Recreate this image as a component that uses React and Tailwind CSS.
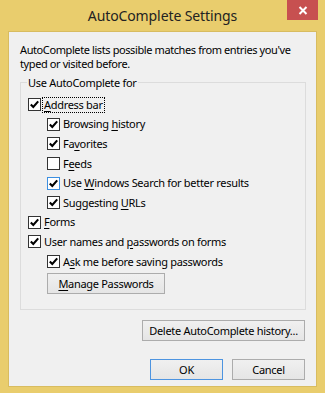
import React from 'react';

const font = { fontFamily: '"Noto Sans", "Segoe UI", sans-serif' };

const Check = ({ checked, hover }) => (
  <span
    className={`w-[13px] h-[13px] shrink-0 bg-white border flex items-center justify-center ${
      hover ? 'border-[#3c8fe0]' : 'border-[#333333]'
    }`}
  >
    {checked && (
      <svg width="11" height="11" viewBox="0 0 11 11">
        <path d="M1.8 5.4 L4.3 8 L9.2 2.4" fill="none" stroke="#000" strokeWidth="2.1" />
      </svg>
    )}
  </span>
);

const Label = ({ pre, key_, post }) => (
  <>
    {pre}
    <span className="underline underline-offset-[2px]">{key_}</span>
    {post}
  </>
);

const Row = ({ checked, hover, indent, focus, children }) => (
  <div className={`flex items-center h-[19.6px] ${indent ? 'pl-[26px]' : 'pl-[7px]'}`}>
    <Check checked={checked} hover={hover} />
    <span
      className={`ml-[1px] px-[1px] leading-[14px] ${
        focus ? 'border border-dotted border-black' : 'border border-transparent'
      }`}
    >
      {children}
    </span>
  </div>
);

const Button = ({ children, primary, className }) => (
  <div
    className={`h-[21px] flex items-center justify-center border bg-gradient-to-b from-[#f0f0f0] to-[#e5e5e5] ${
      primary ? 'border-[#4d94e0]' : 'border-[#acacac]'
    } ${className}`}
  >
    {children}
  </div>
);

export default function App() {
  return (
    <div
      className="w-[325px] h-[393px] bg-[#e9cd6d] flex flex-col text-[11px] tracking-[-0.3px] text-black"
      style={font}
    >
      <div className="relative h-[31px] flex items-center justify-center">
        <span className="text-[14px] tracking-[-0.1px] text-[#222] pb-[1px]">AutoComplete Settings</span>
        <div className="absolute top-0 right-[7px] w-[31px] h-[20px] bg-[#c75050] flex items-center justify-center">
          <svg width="10" height="9" viewBox="0 0 10 9">
            <path d="M1.5 1 L8.5 8 M8.5 1 L1.5 8" stroke="#fff" strokeWidth="2" />
          </svg>
        </div>
      </div>

      <div className="mx-[8px] mb-[6px] flex-1 bg-[#f0f0f0] border border-[#d8bc60] flex flex-col px-[11px]">
        <p className="mt-[11px] leading-[14px] tracking-[-0.4px]">
          AutoComplete lists possible matches from entries you've typed or visited before.
        </p>

        <div className="mt-[11px] border border-[#dcdcdc] flex flex-col pb-[15px] mr-[-1px]">
          <span className="-mt-[7px] ml-[6px] px-[1px] self-start bg-[#f0f0f0] leading-[13px]">
            Use AutoComplete for
          </span>
          <div className="mt-[6px] flex flex-col">
            <Row checked focus>
              <Label key_="A" post="ddress bar" />
            </Row>
            <Row checked indent>
              <Label pre="Browsing " key_="h" post="istory" />
            </Row>
            <Row checked indent>
              <Label pre="Fa" key_="v" post="orites" />
            </Row>
            <Row indent>
              <Label pre="F" key_="e" post="eds" />
            </Row>
            <Row checked indent hover>
              <Label pre="Use " key_="W" post="indows Search for better results" />
            </Row>
            <Row checked indent>
              <Label pre="Suggesting " key_="U" post="RLs" />
            </Row>
            <Row checked>
              <Label key_="F" post="orms" />
            </Row>
            <Row checked>
              <Label pre="User names and " key_="p" post="asswords on forms" />
            </Row>
            <Row checked indent>
              <Label pre="A" key_="s" post="k me before saving passwords" />
            </Row>
          </div>
          <Button className="mt-[2px] ml-[26px] w-[118px]">
            <Label key_="M" post="anage Passwords" />
          </Button>
        </div>

        <div className="mt-[10px] flex justify-end">
          <Button className="w-[163px]">Delete AutoComplete history...</Button>
        </div>

        <div className="mt-[18px] flex justify-end gap-[9px]">
          <Button primary className="w-[73px]">OK</Button>
          <Button className="w-[73px]">Cancel</Button>
        </div>
      </div>
    </div>
  );
}
